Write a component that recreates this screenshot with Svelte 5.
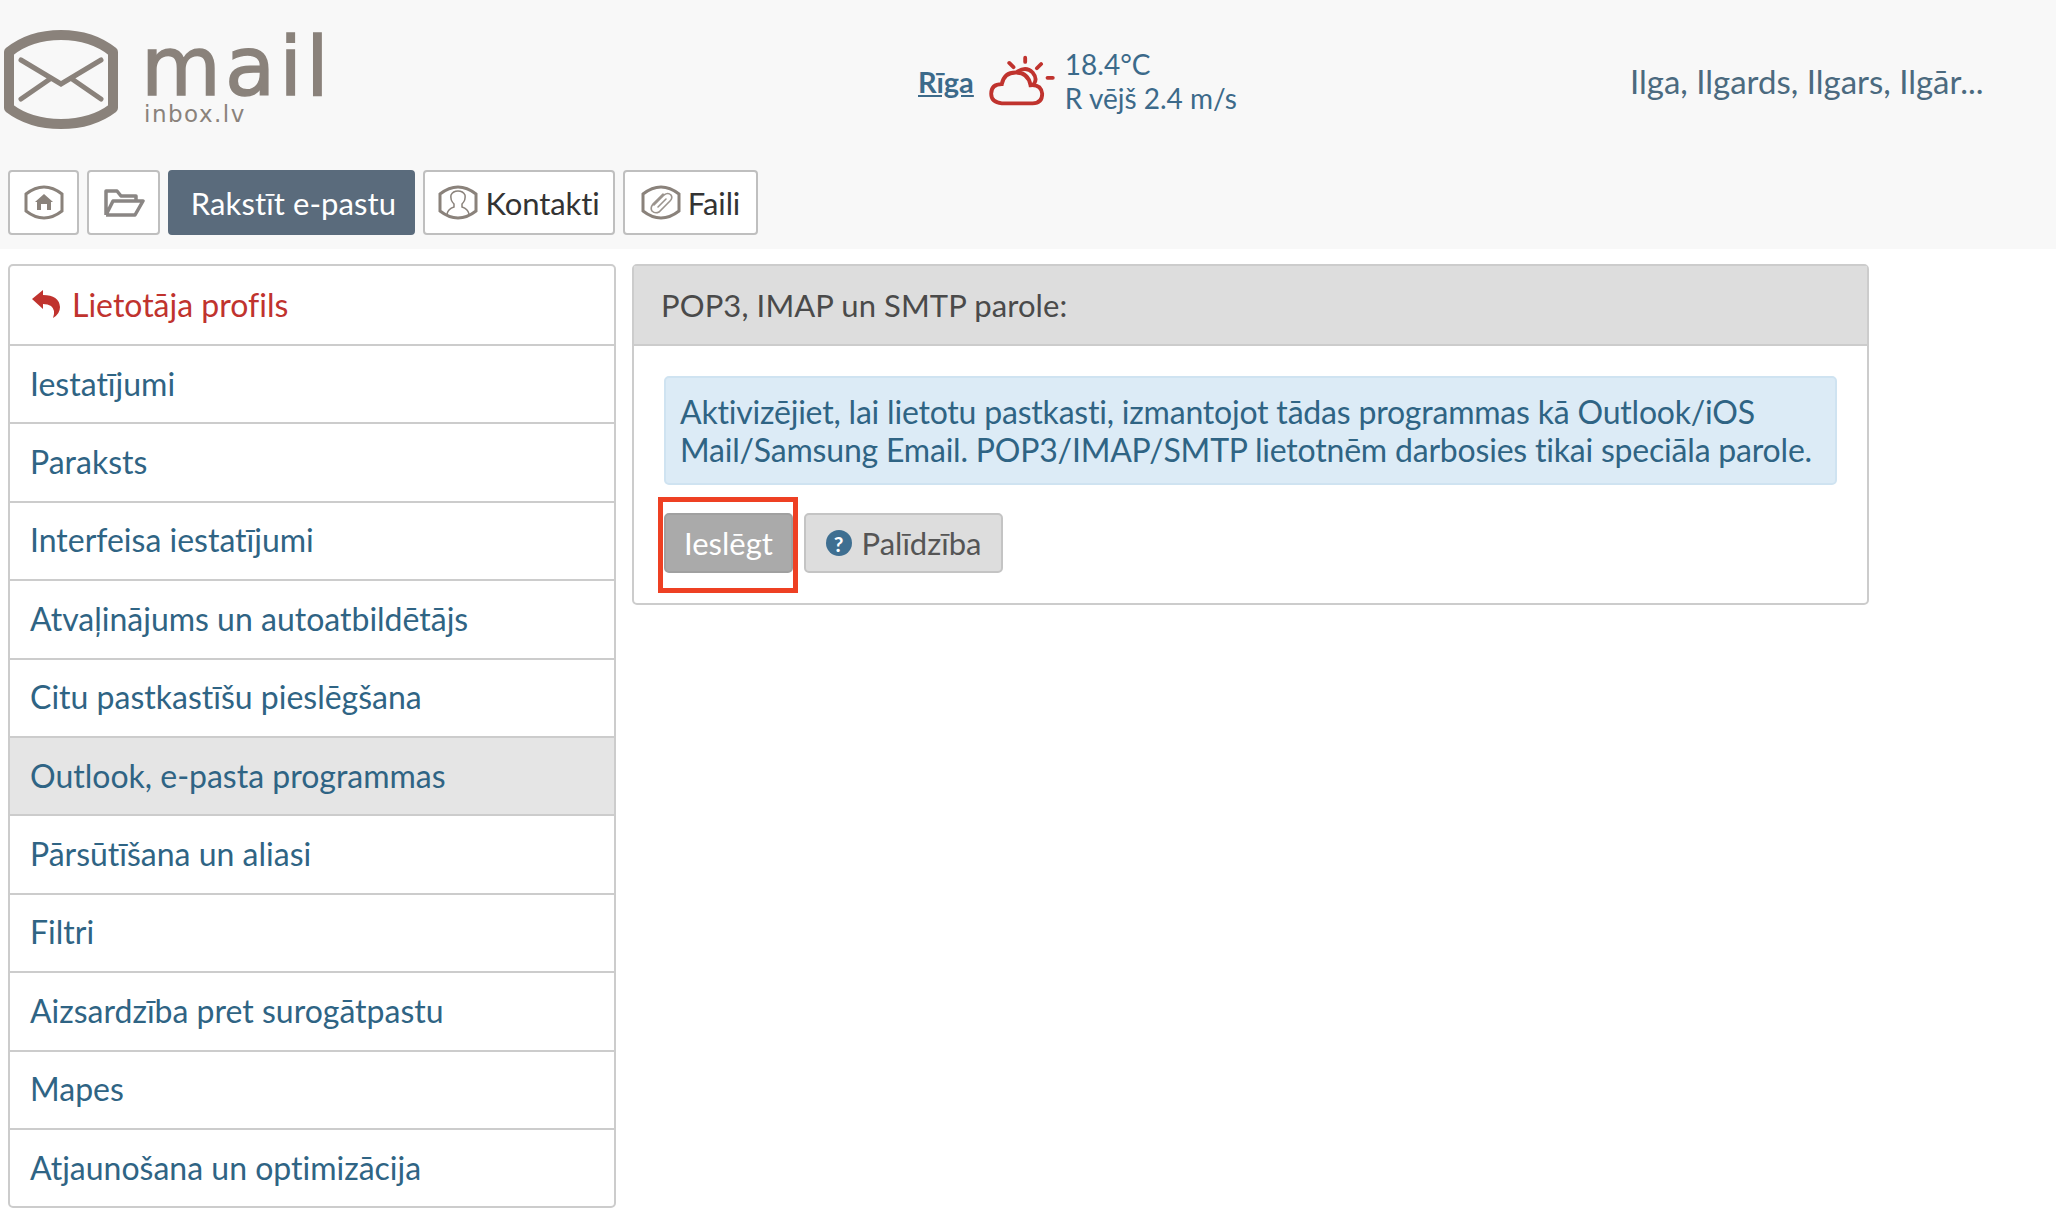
<script>
	const links = [
		'Iestatījumi',
		'Paraksts',
		'Interfeisa iestatījumi',
		'Atvaļinājums un autoatbildētājs',
		'Citu pastkastīšu pieslēgšana',
		'Outlook, e-pasta programmas',
		'Pārsūtīšana un aliasi',
		'Filtri',
		'Aizsardzība pret surogātpastu',
		'Mapes',
		'Atjaunošana un optimizācija',
	];
	const activeLink = 'Outlook, e-pasta programmas';
	const hex = 'M2 9 Q11 2 20 2 Q29 2 38 9 V26 Q29 33 20 33 Q11 33 2 26 Z';
</script>

<div class="page">
	<header class="top">
		<div class="brand">
			<a class="logo" href="#home" aria-label="inbox.lv">
				<svg width="120" height="102" viewBox="0 0 120 102">
					<path d="M9 22 Q30 5 61 5 Q92 5 113 22 V78 Q92 94 61 94 Q30 94 9 78 Z" fill="none" stroke="#8a827b" stroke-width="10" stroke-linejoin="round" />
					<path d="M21 30 L61 54 L101 30 M21 69 L50 49 M101 69 L72 49" fill="none" stroke="#8a827b" stroke-width="5" stroke-linecap="round" />
				</svg>
			</a>
			<div class="wordmark">
				<span class="mail">mail</span>
				<span class="inbox">inbox.lv</span>
			</div>
		</div>
		<div class="weather">
			<a class="city" href="#riga">Rīga</a>
			<svg width="68" height="60" viewBox="0 0 64 56">
				<g fill="none" stroke="#c0332e" stroke-width="3.6" stroke-linecap="round">
					<path d="M35 6 V10 M20 11 L24 15 M50 12 L46 16 M56 25 H61" />
					<path d="M28 19 Q36 14 42 20 Q47 26 43 31" />
					<path d="M13 49 Q3 48 3 40 Q3 31 13 31 Q15 20 26 20 Q38 20 40 32 Q50 31 51 40 Q51 49 42 49 Z" />
				</g>
			</svg>
			<div class="temps">
				<span>18.4°C</span>
				<span>R vējš 2.4 m/s</span>
			</div>
		</div>
		<a class="names" href="#names">Ilga, Ilgards, Ilgars, Ilgār...</a>
	</header>

	<nav class="tabs">
		<a class="tab home" href="#home" aria-label="Sākums">
			<svg width="40" height="35" viewBox="0 0 40 35">
				<path d={hex} fill="none" stroke="#8a827b" stroke-width="3" />
				<path d="M20 9 L29 17 H27 V25 H23 V19 H17 V25 H13 V17 H11 Z" fill="#8a827b" />
			</svg>
		</a>
		<a class="tab folder" href="#folders" aria-label="Mapes">
			<svg width="42" height="30" viewBox="0 0 42 30">
				<path d="M3 27 V3 H14 L18 8 H33 V13 M3 27 H32 L40 13 H10 L3 27" fill="none" stroke="#8a8684" stroke-width="3.5" stroke-linejoin="round" />
			</svg>
		</a>
		<a class="tab compose" href="#compose">Rakstīt e-pastu</a>
		<a class="tab kontakti" href="#contacts">
			<svg width="40" height="35" viewBox="0 0 40 35">
				<path d={hex} fill="none" stroke="#8a827b" stroke-width="3" />
				<path d="M9 29 Q10 24 16 22 V19 Q12 15 13 10 Q15 6 20 6 Q25 6 27 10 Q28 15 24 19 V22 Q30 24 31 29" fill="none" stroke="#8a827b" stroke-width="1.5" />
			</svg>
			Kontakti
		</a>
		<a class="tab faili" href="#files">
			<svg width="40" height="35" viewBox="0 0 40 35">
				<path d={hex} fill="none" stroke="#8a827b" stroke-width="3" />
				<path d="M13 20 L23 10 Q27 7 30 10 Q32 13 29 16 L18 27 Q14 29 11 26 Q9 23 12 19 L22 9 M17 22 L25 14" fill="none" stroke="#9b948e" stroke-width="1.6" stroke-linecap="round" />
			</svg>
			Faili
		</a>
	</nav>

	<main class="content">
		<aside class="menu">
			<a class="row back" href="#profile">
				<svg width="30" height="28" viewBox="0 0 30 28">
					<path d="M1 9 L12 0 V5 Q28 5 29 17 Q29 24 22 28 Q25 20 20 16 Q17 14 12 14 V19 Z" fill="#c0332e" />
				</svg>
				Lietotāja profils
			</a>
			{#each links as link}
				<a class="row" class:active={link === activeLink} href="#settings">{link}</a>
			{/each}
		</aside>

		<section class="panel">
			<h2>POP3, IMAP un SMTP parole:</h2>
			<div class="body">
				<p class="alert">Aktivizējiet, lai lietotu pastkasti, izmantojot tādas programmas kā Outlook/iOS Mail/Samsung Email. POP3/IMAP/SMTP lietotnēm darbosies tikai speciāla parole.</p>
				<div class="actions">
					<div class="marked">
						<button class="btn on">Ieslēgt</button>
						<span class="mark"></span>
					</div>
					<button class="btn help"><span class="q">?</span>Palīdzība</button>
				</div>
			</div>
		</section>
	</main>
</div>

<style>
	:global(body) {
		margin: 0;
		background: #fff;
	}

	.page {
		font-family: Lato, "Liberation Sans", sans-serif;
		font-size: 32px;
		font-variant-ligatures: none;
		color: #2f6484;
	}

	a {
		color: inherit;
		text-decoration: none;
	}

	.top {
		box-sizing: border-box;
		display: grid;
		grid-template-columns: 900px 730px 1fr;
		height: 170px;
		padding-bottom: 8px;
		align-items: center;
		background: #f8f8f8;
	}

	.brand {
		display: flex;
		gap: 21px;
		align-items: center;
	}

	.logo {
		display: flex;
	}

	.wordmark {
		display: flex;
		flex-direction: column;
		color: #8a827b;
		margin-top: -2px;
	}

	.mail {
		font-family: "DejaVu Sans", sans-serif;
		font-size: 82px;
		line-height: 68px;
		letter-spacing: 4px;
		-webkit-text-stroke: 1.5px #8a827b;
	}

	.inbox {
		font-family: "DejaVu Sans", sans-serif;
		font-size: 23px;
		line-height: 26px;
		letter-spacing: 1.5px;
		margin-left: 3px;
	}

	.weather {
		display: flex;
		align-items: center;
		margin-left: 18px;
		font-size: 28px;
		color: #3c6a8a;
	}

	.city {
		font-size: 29px;
		font-weight: 700;
		text-decoration: underline;
		margin-right: 14px;
	}

	.temps {
		display: flex;
		flex-direction: column;
		margin-left: 9px;
		line-height: 34px;
	}

	.names {
		font-size: 33px;
		color: #4b6a7f;
	}

	.tabs {
		display: flex;
		gap: 8px;
		padding: 0 8px 14px;
		background: #f8f8f8;
		height: 65px;
	}

	.tab {
		box-sizing: border-box;
		display: flex;
		align-items: center;
		justify-content: center;
		height: 65px;
		background: #fff;
		border: 2px solid #bfbfbf;
		border-radius: 4px;
		color: #333;
		font-size: 31px;
		letter-spacing: -0.1px;
	}

	.home {
		width: 71px;
	}

	.folder {
		width: 73px;
	}

	.compose {
		width: 247px;
		padding-left: 4px;
		background: #5a6b7c;
		border-color: #5a6b7c;
		color: #fff;
		letter-spacing: 0.1px;
	}

	.kontakti {
		width: 192px;
		gap: 7px;
	}

	.faili {
		width: 135px;
		gap: 7px;
	}

	.content {
		display: flex;
		align-items: flex-start;
		gap: 16px;
		padding: 15px 8px 0;
	}

	.menu {
		box-sizing: border-box;
		width: 608px;
		display: flex;
		flex-direction: column;
		background: #fff;
		border: 2px solid #ccc;
		border-radius: 5px;
	}

	.row {
		box-sizing: border-box;
		display: flex;
		align-items: center;
		height: 78.4px;
		padding: 0 0 2px 20px;
		border-top: 2px solid #ccc;
	}

	.row.back {
		height: 78px;
		padding-left: 21px;
		border-top: 0;
		color: #c0332e;
		gap: 11px;
	}

	.row.active {
		background: #e5e5e5;
	}

	.panel {
		box-sizing: border-box;
		width: 1237px;
		height: 341px;
		background: #fff;
		border: 2px solid #ccc;
		border-radius: 5px;
	}

	h2 {
		box-sizing: border-box;
		margin: 0;
		height: 80px;
		display: flex;
		align-items: center;
		padding-left: 27px;
		background: #ddd;
		border-bottom: 2px solid #ccc;
		font-size: 31px;
		font-weight: 400;
		letter-spacing: 0.1px;
		color: #4a4a4a;
	}

	.body {
		padding: 30px 30px 0;
	}

	.alert {
		box-sizing: border-box;
		margin: 0;
		height: 109px;
		padding: 15px 14px;
		background: #dcebf6;
		border: 2px solid #cfe3f1;
		border-radius: 5px;
		line-height: 38px;
		letter-spacing: -0.2px;
	}

	.actions {
		display: flex;
		gap: 11px;
		margin-top: 28px;
	}

	.marked {
		position: relative;
	}

	.mark {
		position: absolute;
		inset: -16px -5px -20px -6px;
		border: 5px solid #ee4023;
		pointer-events: none;
	}

	.btn {
		box-sizing: border-box;
		display: flex;
		align-items: center;
		justify-content: center;
		height: 60px;
		border-radius: 5px;
		font: inherit;
		font-size: 31px;
	}

	.on {
		width: 129px;
		background: #aaa;
		border: 2px solid #a0a0a0;
		color: #fff;
	}

	.help {
		width: 199px;
		gap: 10px;
		background: #ddd;
		border: 2px solid #c4c4c4;
		color: #555;
	}

	.q {
		display: flex;
		align-items: center;
		justify-content: center;
		width: 26px;
		height: 26px;
		border-radius: 50%;
		background: #3f6f91;
		color: #fff;
		font-size: 21px;
		font-weight: 700;
	}
</style>
